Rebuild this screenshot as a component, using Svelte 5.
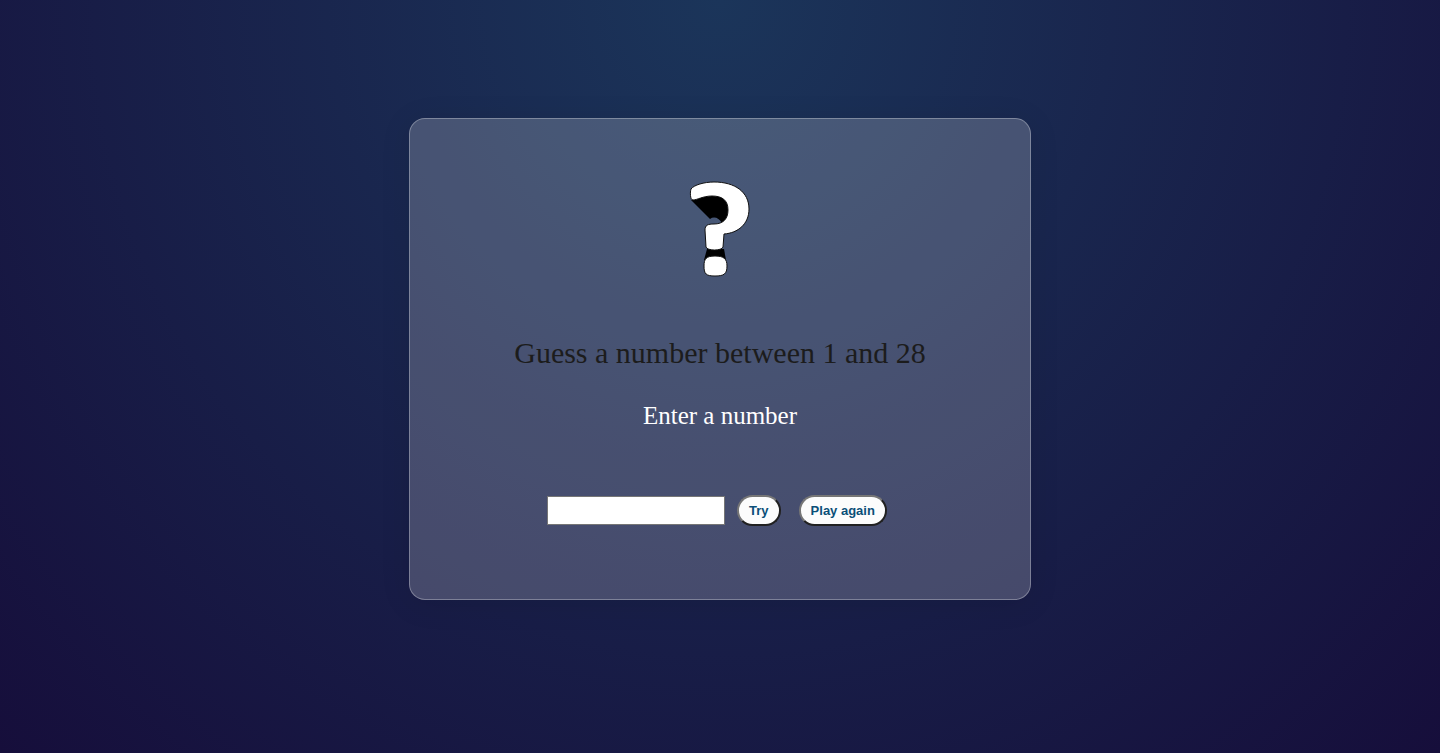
<script>
  const max = 28;
  const secret = 1 + Math.floor(Math.random() * max);
  let target = $state(secret);
  let guess = $state('');
  let message = $state('Enter a number');

  function tryGuess(event) {
    event.preventDefault();
    const n = Number(guess);
    if (!n) message = 'Enter a number';
    else if (n === target) message = 'Correct!';
    else message = n < target ? 'Too low' : 'Too high';
  }

  function playAgain() {
    target = 1 + Math.floor(Math.random() * max);
    guess = '';
    message = 'Enter a number';
  }
</script>

<main>
  <section class="card">
    <svg class="mark" viewBox="0 0 62 98" aria-hidden="true">
      <path d="M2 19 L21 38 C25 35 30 37 33 42 L42 34 L38 13 L12 12 Z" fill="#000" />
      <path d="M18 68 H35 L37 79 L15 79 Z" fill="#000" />
      <path
        d="M2 8 C5 4 15 1 25 1 C46 1 60 11 60 28 C60 43 49 52 35 53 L34 66 C33 70 18 70 17 66 L16 49 C16 44 19 43 25 43 C34 43 39 38 39 29 C39 19 33 15 23 15 C14 15 8 19 4 19 C1 19 1 11 2 8 Z"
        fill="#fff" stroke="#111" stroke-width="1" />
      <path
        d="M15 85 C15 78 17 75 26 75 C35 75 38 78 38 85 C38 93 35 95 26 95 C17 95 15 93 15 85 Z"
        fill="#fff" stroke="#111" stroke-width="1" />
    </svg>
    <h1>Guess a number between 1 and {max}</h1>
    <form onsubmit={tryGuess}>
      <label for="guess">{message}</label>
      <div class="controls">
        <input id="guess" type="text" inputmode="numeric" autocomplete="off" bind:value={guess} />
        <button type="submit">Try</button>
        <button type="button" onclick={playAgain}>Play again</button>
      </div>
    </form>
  </section>
</main>

<style>
  :global(body) {
    margin: 0;
  }
  main {
    box-sizing: border-box;
    min-height: 100vh;
    padding: 118px 16px;
    background: radial-gradient(ellipse at top, #1b355a, #160e3b);
    font-family: "Liberation Serif", "Times New Roman", serif;
  }
  .card {
    display: flex;
    flex-direction: column;
    align-items: center;
    max-width: 620px;
    margin: 0 auto;
    padding: 62px 0 73px;
    border: 1px solid rgba(255, 255, 255, 0.3);
    border-radius: 16px;
    background: rgba(255, 255, 255, 0.2);
    box-shadow: 0 4px 30px rgba(0, 0, 0, 0.1);
    text-align: center;
  }
  .mark {
    width: 62px;
    height: 98px;
  }
  h1 {
    margin: 56px 0 0;
    color: #1c1c1c;
    font-size: 30px;
    font-weight: 400;
    line-height: 36px;
  }
  form {
    display: flex;
    flex-direction: column;
    align-items: center;
    margin-top: 30px;
  }
  label {
    color: #fff;
    font-size: 25px;
    line-height: 30px;
  }
  .controls {
    display: flex;
    align-items: center;
    margin-top: 64px;
    padding-right: 6px;
  }
  input {
    box-sizing: border-box;
    width: 178px;
    height: 29px;
    margin-right: 12px;
    padding: 0 4px;
    border: 1px solid #767676;
    border-radius: 0;
    background: #fff;
    font: 13px/16px "Liberation Sans", Arial, sans-serif;
  }
  button {
    height: 31px;
    padding: 0 10px;
    border: 2px outset #767676;
    border-radius: 16px;
    background: #fcfcfc;
    color: #0a4f78;
    font: bold 13px/16px "Liberation Sans", Arial, sans-serif;
    cursor: pointer;
  }
  button + button {
    margin-left: 18px;
  }
</style>
